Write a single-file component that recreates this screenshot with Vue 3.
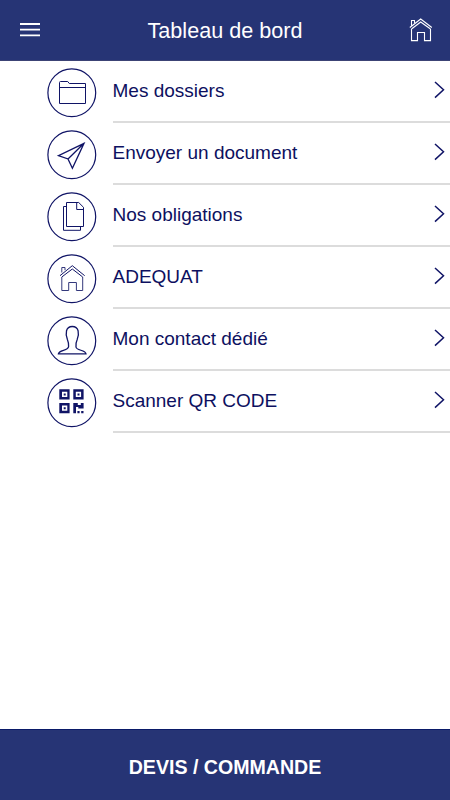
<script setup>
const items = [
  { label: 'Mes dossiers', icon: 'folder' },
  { label: 'Envoyer un document', icon: 'send' },
  { label: 'Nos obligations', icon: 'docs' },
  { label: 'ADEQUAT', icon: 'home' },
  { label: 'Mon contact dédié', icon: 'person' },
  { label: 'Scanner QR CODE', icon: 'qr' },
]
</script>

<template>
  <div class="screen">
    <header class="bar">
      <svg class="burger" viewBox="0 0 20 15"><path d="M0 2H20M0 7.7H20M0 13.4H20" /></svg>
      <h1 class="title">Tableau de bord</h1>
      <svg class="house" viewBox="0 0 24 25">
        <path d="M.8 9.5 11.7 1 22.8 9.5M2.5 11V22.6H8.5V14.5H15.5V22.6H21.5V11M2.5 11 11.7 4 21.5 11M2.5 7.5V2.5H5.5V5" />
      </svg>
    </header>

    <main class="list">
      <div v-for="item in items" :key="item.icon" class="row">
        <svg class="icon" viewBox="0 -1 64 62">
          <circle cx="31.8" cy="30.8" r="23.9" />
          <path v-if="item.icon === 'folder'" d="M19.5 25.5H45.5M19.5 41.5V20.5Q19.5 19.5 20.5 19.5H27.7L29.3 21.5H45.5V41.5Z" />
          <path v-else-if="item.icon === 'send'" class="thick" d="M44 19.3 18.5 31.7 28 35 32.4 44.3ZM28 35 44 19.3" />
          <g v-else-if="item.icon === 'docs'">
            <path d="M26.5 16.5H38.7L43.5 21.3V40.5H26.5ZM36.7 17V23.5H43.5" />
            <path d="M26 20.5H23.5V44.3H40.5V41" />
          </g>
          <g v-else-if="item.icon === 'home'" class="light">
            <path d="M21.8 29V42.5H28.7V34.5H36.4V42.5H42.7V29M21.8 24.5V19.5H25V22.2" />
            <path class="roof" d="M20 27.7 32.3 17.7 44.7 27.7M21.8 29 32.3 21 42.7 29" />
          </g>
          <path v-else-if="item.icon === 'person'" class="thick" d="M18.4 43.8C18.8 39.7 28.5 40.8 28.6 36.5C28.7 33 28.4 31.8 27.4 29.5C25.2 23.5 25.6 16.5 32.3 16.5C39 16.5 39.4 23.5 37.2 29.5C36 32 35.7 34 36 37C36.3 40.8 45.6 39.7 46 43.8Z" />
          <g v-else class="qr">
            <path fill-rule="evenodd" d="M19.3 17.2h10.3v10.3h-10.3zM22 19.7v5.3h5.3v-5.3zM33.3 17.2h10.3v10.3h-10.3zM35.8 19.7v5.3h5.3v-5.3zM19.3 31h10.3v10.3h-10.3zM22 33.5v5.3h5.3v-5.3z" />
            <path d="M23.7 21.4h2v2h-2zM37.5 21.4h2v2h-2zM23.7 35.2h2v2h-2zM33.3 31h4.5v2h3V31h2.8v5.5h-5.3v-1.6h-2.3v6.4h-2.7zM37.4 39h2.2v2.3h-2.2zM41.2 39h2.3v2.3h-2.3z" />
          </g>
        </svg>
        <div class="content">
          <span class="label">{{ item.label }}</span>
          <svg class="chevron" viewBox="0 0 11 18"><path d="M1 1 9.5 8.8 1 16.6" /></svg>
        </div>
      </div>
    </main>

    <button class="action">DEVIS / COMMANDE</button>
  </div>
</template>

<style>
body {
  margin: 0;
  background: #fff;
}
</style>

<style scoped>
.screen {
  display: flex;
  flex-direction: column;
  width: 450px;
  height: 800px;
  overflow: hidden;
  background: #fff;
  font-family: "Liberation Sans", Arial, sans-serif;
}
.bar {
  flex: none;
  box-sizing: border-box;
  display: flex;
  align-items: center;
  justify-content: space-between;
  height: 61px;
  padding: 0 17px 0 20px;
  background: #263475;
  border-bottom: 1px solid #3c4375;
}
svg {
  display: block;
  flex: none;
  fill: none;
}
.burger {
  width: 20px;
  height: 15px;
  margin-bottom: 1px;
  stroke: #fff;
  stroke-width: 1.8;
}
.title {
  margin: 0;
  padding: 1px 0 0 1px;
  color: #fff;
  font-size: 21.6px;
  font-weight: 400;
  line-height: 60px;
}
.house {
  width: 24px;
  height: 25px;
  stroke: #fff;
  stroke-width: 1.1;
}
.row {
  display: flex;
  height: 62px;
  padding-left: 40px;
}
.icon {
  width: 64px;
  height: 62px;
  stroke: #101466;
  stroke-width: 1;
}
.icon circle {
  stroke-width: 1.2;
}
.thick {
  stroke-width: 1.3;
}
.light {
  stroke: #34397c;
}
.roof {
  stroke: #101466;
}
.qr {
  fill: #101466;
  stroke: none;
}
.content {
  flex: 1;
  box-sizing: border-box;
  display: flex;
  align-items: center;
  justify-content: space-between;
  margin-left: 8.5px;
  padding-right: 5px;
  border-bottom: 2px solid #dcdcdc;
}
.label {
  color: #0d1060;
  font-size: 19px;
}
.chevron {
  width: 11px;
  height: 18px;
  margin-bottom: 3px;
  stroke: #101466;
  stroke-width: 1.5;
}
.action {
  flex: none;
  height: 71px;
  margin: auto 0 0;
  padding: 4px 0 0;
  border: 0;
  border-top: 1px solid #0a1a68;
  background: #263475;
  color: #fff;
  font: bold 19.6px/24px "Liberation Sans", Arial, sans-serif;
}
</style>
